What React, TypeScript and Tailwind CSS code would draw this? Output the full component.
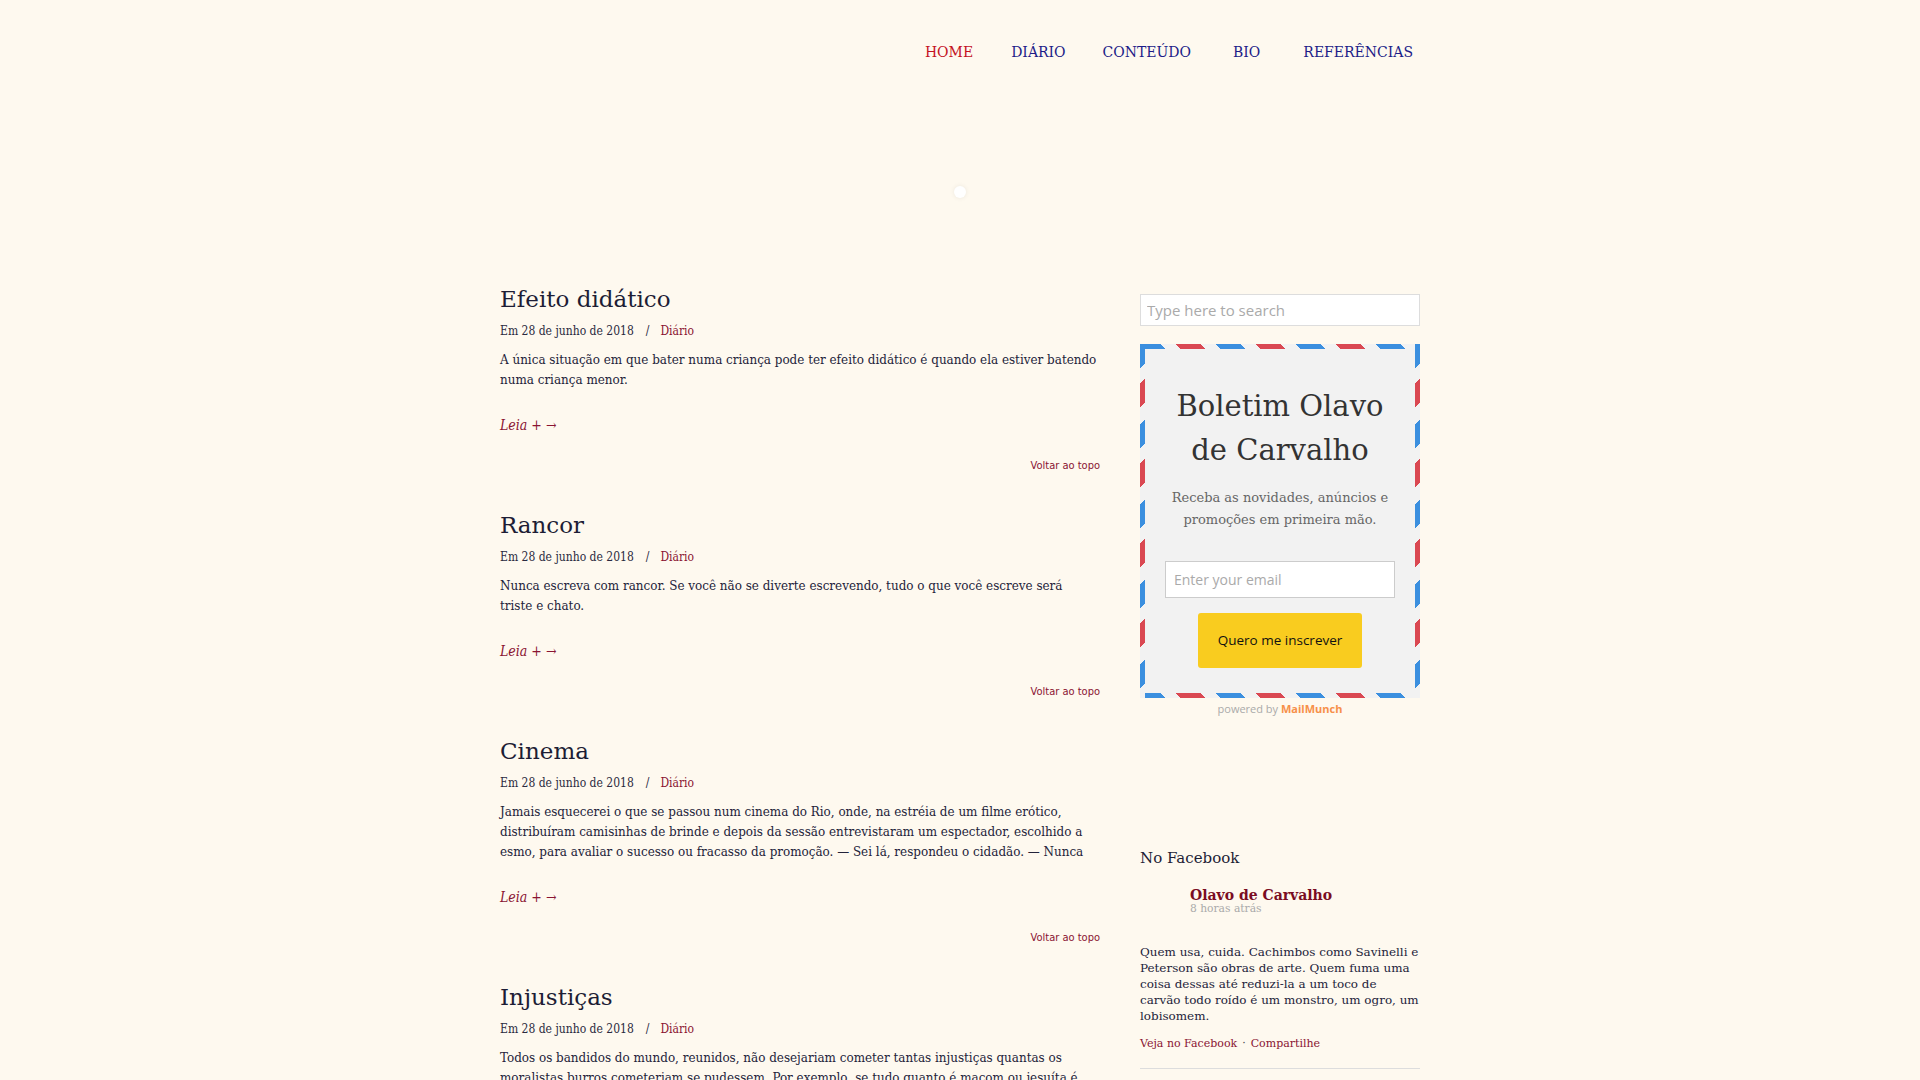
import React from 'react'

const POSTS = [
  {
    title: 'Efeito didático',
    body: 'A única situação em que bater numa criança pode ter efeito didático é quando ela estiver batendo numa criança menor.',
  },
  {
    title: 'Rancor',
    body: 'Nunca escreva com rancor. Se você não se diverte escrevendo, tudo o que você escreve será triste e chato.',
  },
  {
    title: 'Cinema',
    body: 'Jamais esquecerei o que se passou num cinema do Rio, onde, na estréia de um filme erótico, distribuíram camisinhas de brinde e depois da sessão entrevistaram um espectador, escolhido a esmo, para avaliar o sucesso ou fracasso da promoção. — Sei lá, respondeu o cidadão. — Nunca',
  },
  {
    title: 'Injustiças',
    body: 'Todos os bandidos do mundo, reunidos, não desejariam cometer tantas injustiças quantas os moralistas burros cometeriam se pudessem. Por exemplo, se tudo quanto é maçom ou jesuíta é',
  },
]

// ---------------------------------------------------------------------------
// Cabeçalho
// ---------------------------------------------------------------------------

function Nav() {
  return (
    <nav className="h-[104px] flex items-center justify-end pr-[7px] font-['DejaVu_Serif',serif] text-[14px] leading-[20px]">
      <a className="text-[#c4121f]">HOME</a>
      <a className="ml-[38px] text-[#1c1c88]">DIÁRIO</a>
      <a className="ml-[37px] text-[#1c1c88]">CONTEÚDO</a>
      <a className="ml-[42px] text-[#1c1c88]">BIO</a>
      <a className="ml-[43px] text-[#1c1c88]">REFERÊNCIAS</a>
    </nav>
  )
}

// ---------------------------------------------------------------------------
// Posts
// ---------------------------------------------------------------------------

function Post({ title, body }: { title: string; body: string }) {
  return (
    <article className="mb-[38px]">
      <h2 className="font-['DejaVu_Serif',serif] text-[23px] leading-[28px] text-[#1d1d35]">{title}</h2>
      <div className="mt-[10px] font-['DejaVu_Serif_Condensed','DejaVu_Serif',serif] [font-stretch:condensed] text-[12px] leading-[17px] text-[#2a2a40]">
        Em 28 de junho de 2018<span className="ml-[12px] mr-[11px]">/</span><a className="text-[#8a1432]">Diário</a>
      </div>
      <p className="w-[597px] mt-[10px] font-['DejaVu_Serif_Condensed','DejaVu_Serif',serif] [font-stretch:condensed] text-[13.3px] leading-[20px] text-[#23233a]">
        {body}
      </p>
      <a className="block mt-[25px] font-['DejaVu_Serif_Condensed','DejaVu_Serif',serif] [font-stretch:condensed] italic text-[14px] leading-[20px] text-[#8a1432]">
        Leia + →
      </a>
      <div className="mt-[24px] text-right font-['DejaVu_Sans_Condensed','DejaVu_Sans',sans-serif] [font-stretch:condensed] text-[11px] leading-[14px] text-[#8a1432]">
        Voltar ao topo
      </div>
    </article>
  )
}

// ---------------------------------------------------------------------------
// Barra lateral
// ---------------------------------------------------------------------------

// listras de envelope aéreo
const STRIPE_H =
  'bg-[repeating-linear-gradient(45deg,#3b8fdf_0px,#3b8fdf_18px,#f2f2f2_18px,#f2f2f2_28.3px,#da4852_28.3px,#da4852_46.3px,#f2f2f2_46.3px,#f2f2f2_56.57px)]'
const STRIPE_V =
  'bg-[repeating-linear-gradient(135deg,#3b8fdf_0px,#3b8fdf_17px,#f2f2f2_17px,#f2f2f2_27.6px,#da4852_27.6px,#da4852_45.2px,#f2f2f2_45.2px,#f2f2f2_56.57px)]'

function Newsletter() {
  return (
    <div className="relative h-[354px] bg-[#f2f2f2] px-[5px] pt-[40px] flex flex-col items-center">
      <div className={`absolute top-0 left-0 right-0 h-[5px] ${STRIPE_H}`} />
      <div className={`absolute bottom-0 left-0 right-0 h-[5px] ${STRIPE_H}`} />
      <div className={`absolute top-0 bottom-0 left-0 w-[5px] ${STRIPE_V}`} />
      <div className={`absolute top-0 bottom-0 right-0 w-[5px] ${STRIPE_V}`} />

      <h3 className="font-['DejaVu_Serif',serif] text-[29px] leading-[44px] text-[#333] text-center">
        Boletim Olavo
        <br />
        de Carvalho
      </h3>
      <p className="mt-[15px] font-['DejaVu_Serif',serif] text-[13px] leading-[22px] text-[#666] text-center">
        Receba as novidades, anúncios e
        <br />
        promoções em primeira mão.
      </p>
      <input
        placeholder="Enter your email"
        className="mt-[30px] w-[230px] h-[37px] bg-white border border-[#ccc] pl-[8px] font-['Open_Sans',sans-serif] text-[14px] placeholder:text-[#aaa] outline-none"
      />
      <button className="mt-[15px] w-[164px] h-[55px] rounded-[3px] bg-[#f9cc1f] font-['Open_Sans',sans-serif] font-medium text-[13.5px] text-[#111]">
        Quero me inscrever
      </button>
    </div>
  )
}

function FacebookPost() {
  return (
    <div className="font-['DejaVu_Serif',serif]">
      <h4 className="text-[15px] leading-[20px] text-[#1d1d35]">No Facebook</h4>
      <div className="mt-[19px] flex gap-[10px]">
        <div className="w-[40px] h-[40px] shrink-0" />
        <div>
          <div className="text-[14px] leading-[16px] font-bold text-[#7a0c22]">Olavo de Carvalho</div>
          <div className="text-[10.7px] leading-[12px] text-[#aaa]">8 horas atrás</div>
        </div>
      </div>
      <p className="mt-[17px] text-[11.95px] leading-[16px] text-[#23233a]">
        Quem usa, cuida. Cachimbos como Savinelli e Peterson são obras de arte. Quem fuma uma coisa dessas até reduzi-la a um toco de carvão todo roído é um monstro, um ogro, um lobisomem.
      </p>
      <div className="mt-[13px] text-[11px] leading-[14px] text-[#8a1432]">
        <a>Veja no Facebook</a>
        <span className="mx-[5px] text-[#555]">·</span>
        <a>Compartilhe</a>
      </div>
      <div className="mt-[17px] h-px bg-[#ddd]" />
    </div>
  )
}

function Sidebar() {
  return (
    <aside className="w-[280px] shrink-0 pt-[14px]">
      <input
        placeholder="Type here to search"
        className="w-full h-[32px] bg-white border border-[#ddd] pl-[6px] font-['Open_Sans',sans-serif] text-[15px] placeholder:text-[#aaa] outline-none"
      />
      <div className="mt-[18px]">
        <Newsletter />
      </div>
      <div className="mt-[4px] text-center font-['Open_Sans',sans-serif] text-[11px] leading-[14px] text-[#aaa]">
        powered by <span className="font-bold text-[#f7904a]">MailMunch</span>
      </div>
      <div className="mt-[132px]">
        <FacebookPost />
      </div>
    </aside>
  )
}

// ---------------------------------------------------------------------------
// Página
// ---------------------------------------------------------------------------

export default function App() {
  return (
    <div className="min-h-screen bg-[#fef9ef]">
      <div className="w-[920px] mx-auto">
        <Nav />
        <div className="h-[176px] flex items-center justify-center">
          <div className="w-3 h-3 rounded-full bg-white shadow-[0_0_5px_rgba(0,0,0,0.08)]" />
        </div>
        <div className="flex gap-[40px]">
          <main className="w-[600px] pt-[5px]">
            {POSTS.map(p => (
              <Post key={p.title} title={p.title} body={p.body} />
            ))}
          </main>
          <Sidebar />
        </div>
      </div>
    </div>
  )
}
